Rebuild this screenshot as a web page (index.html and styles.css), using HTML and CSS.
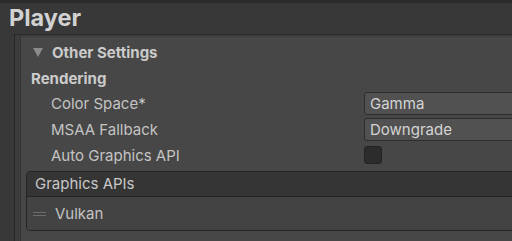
FILE: index.html
```html
<!DOCTYPE html>
<html lang="en">
<head>
  <meta charset="UTF-8" />
  <title>Player Settings</title>
  <link rel="stylesheet" href="styles.css">
</head>
<body>

  <div class="player-header">Player</div>

  <div class="player-frame">
    <div class="player-panel">
      <div class="foldout">
        <span class="foldout-arrow"></span>
        <span class="foldout-title">Other Settings</span>
      </div>

      <div class="section-title">Rendering</div>

      <div class="field-row">
        <div class="field-label">Color Space*</div>
        <div class="field-control">
          <div class="dropdown">Gamma</div>
        </div>
      </div>
      <div class="field-row">
        <div class="field-label">MSAA Fallback</div>
        <div class="field-control">
          <div class="dropdown">Downgrade</div>
        </div>
      </div>
      <div class="field-row">
        <div class="field-label">Auto Graphics API</div>
        <div class="field-control">
          <div class="checkbox"></div>
        </div>
      </div>

      <div class="api-list">
        <div class="api-list-header">Graphics APIs</div>
        <div class="api-list-body">
          <div class="api-item">
            <span class="drag-handle"></span>
            <span class="api-name">Vulkan</span>
          </div>
        </div>
      </div>
    </div>
  </div>

</body>
</html>
```

FILE: styles.css
```css
* {
  box-sizing: border-box;
}

body {
  margin: 0;
  width: 512px;
  height: 241px;
  overflow: hidden;
  background: #383838;
  font-family: Inter, "Noto Sans", sans-serif;
  color: #c8c8c8;
  border-top: 3px solid #2b2b2b;
}

.player-header {
  height: 31px;
  padding-left: 9px;
  font-size: 23.5px;
  font-weight: bold;
  line-height: 30px;
  color: #d2d2d2;
}

.player-frame {
  margin-left: 14px;
  height: 210px;
  border-left: 1px solid #262626;
  border-top: 1px solid #2b2b2b;
  background: #3c3c3c;
  padding: 1px 0 0 5px;
}

.player-panel {
  height: 100%;
  background: #474747;
  border-left: 1px solid #333333;
  border-top: 1px solid #3f3f3f;
  padding: 4px 0 0 5px;
}

.foldout {
  display: flex;
  align-items: center;
  height: 22px;
  padding-left: 7px;
}

.foldout-arrow {
  width: 0;
  height: 0;
  border-left: 5px solid transparent;
  border-right: 5px solid transparent;
  border-top: 9px solid #8b8b8b;
  margin-right: 9px;
}

.foldout-title {
  font-size: 15px;
  font-weight: bold;
  color: #cbcbcb;
}

.section-title {
  height: 27px;
  line-height: 32px;
  padding-left: 5px;
  font-size: 15px;
  font-weight: bold;
  color: #cbcbcb;
}

.field-row {
  display: flex;
  align-items: center;
  height: 26px;
}

.field-label {
  width: 338px;
  padding-left: 25px;
  font-size: 15px;
  color: #c4c4c4;
}

.field-control {
  flex: 1;
}

.dropdown {
  height: 23px;
  line-height: 21px;
  margin-right: -10px;
  padding-left: 5px;
  background: #515151;
  border: 1px solid #2c2c2c;
  border-radius: 3px;
  font-size: 15px;
  color: #d4d4d4;
}

.checkbox {
  width: 18px;
  height: 18px;
  background: #2c2c2c;
  border: 1px solid #232323;
  border-radius: 3px;
}

.api-list {
  margin-top: 3px;
  margin-right: -10px;
  border: 1px solid #242424;
  border-radius: 4px;
  overflow: hidden;
}

.api-list-header {
  height: 25px;
  line-height: 24px;
  padding-left: 8px;
  background: #353535;
  border-bottom: 1px solid #242424;
  font-size: 15px;
  color: #c8c8c8;
}

.api-list-body {
  height: 33px;
  background: #434343;
}

.api-item {
  display: flex;
  align-items: center;
  height: 33px;
  padding-left: 6px;
}

.drag-handle {
  width: 13px;
  height: 4px;
  border-top: 1px solid #6c6c6c;
  border-bottom: 1px solid #6c6c6c;
  margin-right: 9px;
}

.api-name {
  font-size: 15px;
  color: #c4c4c4;
}
```
